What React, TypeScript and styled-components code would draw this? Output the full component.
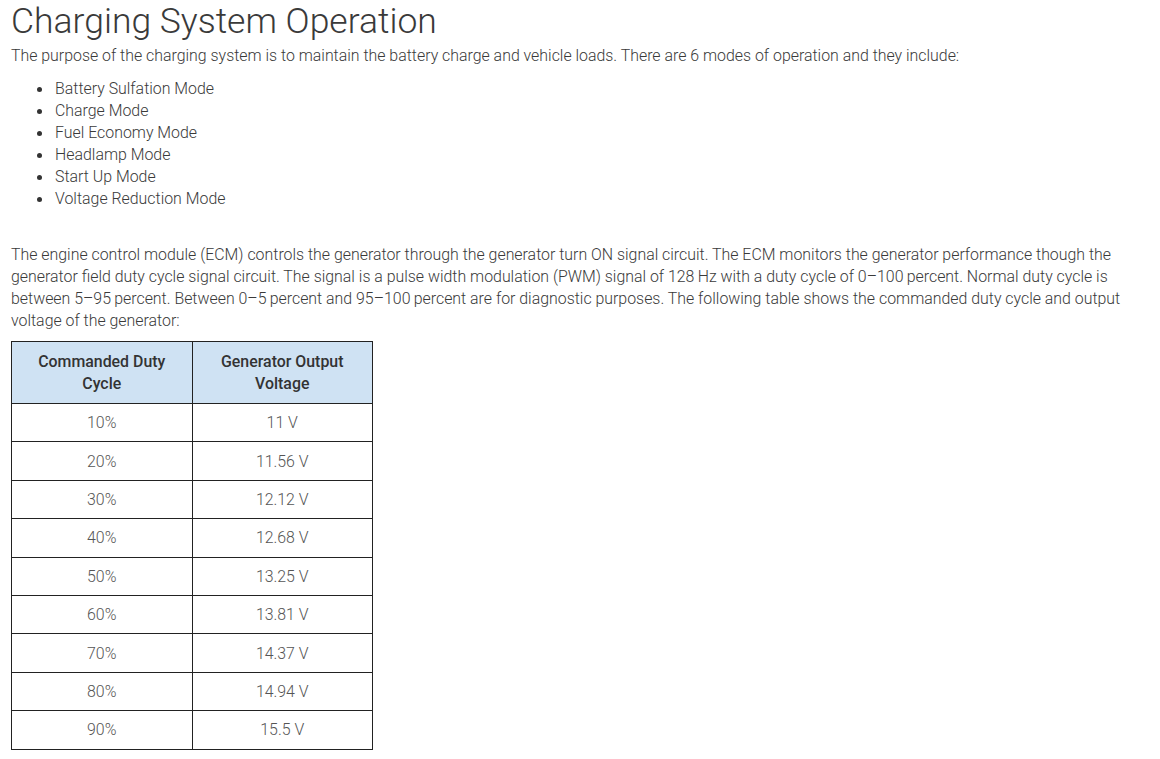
import React from 'react';
import styled, {createGlobalStyle} from 'styled-components';

const GlobalStyle = createGlobalStyle`
    body {
        margin: 0;
        background: #fff;
        font-family: Roboto, "Liberation Sans", sans-serif;
        color: #3a3a3a;
    }
`;

const Page = styled.div`
    padding: 1px 11px 0;
`;

const Title = styled.h1`
    margin: 0;
    font-size: 35.5px;
    font-weight: 300;
    line-height: 40px;
    color: #3a3a3a;
`;

const Text = styled.p`
    margin: 4px 0 0;
    font-size: 15.9px;
    font-weight: 300;
    line-height: 22px;
`;

const ModeList = styled.ul`
    margin: 11px 0 0;
    padding-left: 44px;
    list-style: none;
    font-size: 15.9px;
    font-weight: 300;
    line-height: 22px;
`;

const Mode = styled.li`
    &::before {
        content: '';
        display: inline-block;
        width: 5px;
        height: 5px;
        margin: 0 13px 0 -18px;
        border-radius: 50%;
        background: #333;
        vertical-align: middle;
    }
`;

const Intro = styled(Text)`
    margin-top: 34px;
`;

const Table = styled.table`
    margin-top: 9px;
    border-collapse: collapse;
    width: 362px;
    font-size: 15.9px;
`;

const HeadCell = styled.th`
    width: 50%;
    padding: 8.5px 18px;
    border: 1px solid #222;
    background: #cfe2f3;
    font-weight: 500;
    line-height: 22px;
    color: #333;
`;

const Cell = styled.td`
    height: 37.4px;
    padding: 0 10px;
    border: 1px solid #222;
    text-align: center;
    font-weight: 300;
    color: #555;
`;

const rows: [string, string][] = [
    ['10%', '11 V'],
    ['20%', '11.56 V'],
    ['30%', '12.12 V'],
    ['40%', '12.68 V'],
    ['50%', '13.25 V'],
    ['60%', '13.81 V'],
    ['70%', '14.37 V'],
    ['80%', '14.94 V'],
    ['90%', '15.5 V'],
];

const modes = [
    'Battery Sulfation Mode',
    'Charge Mode',
    'Fuel Economy Mode',
    'Headlamp Mode',
    'Start Up Mode',
    'Voltage Reduction Mode',
];

export default function App() {
    return (
        <Page>
            <GlobalStyle />
            <Title>Charging System Operation</Title>
            <Text>
                The purpose of the charging system is to maintain the battery charge and vehicle loads. There are 6 modes of
                operation and they include:
            </Text>
            <ModeList>
                {modes.map(m => <Mode key={m}>{m}</Mode>)}
            </ModeList>
            <Intro>
                The engine control module (ECM) controls the generator through the generator turn ON signal circuit. The ECM
                monitors the generator performance though the generator field duty cycle signal circuit. The signal is a pulse
                width modulation (PWM) signal of 128&#8201;Hz with a duty cycle of 0&ndash;100&#8201;percent. Normal duty cycle
                is between 5&ndash;95&#8201;percent. Between 0&ndash;5&#8201;percent and 95&ndash;100&#8201;percent are for
                diagnostic purposes. The following table shows the commanded duty cycle and output voltage of the generator:
            </Intro>
            <Table>
                <thead>
                    <tr>
                        <HeadCell>Commanded Duty Cycle</HeadCell>
                        <HeadCell>Generator Output Voltage</HeadCell>
                    </tr>
                </thead>
                <tbody>
                    {rows.map(([duty, volt]) => (
                        <tr key={duty}>
                            <Cell>{duty}</Cell>
                            <Cell>{volt}</Cell>
                        </tr>
                    ))}
                </tbody>
            </Table>
        </Page>
    );
}
